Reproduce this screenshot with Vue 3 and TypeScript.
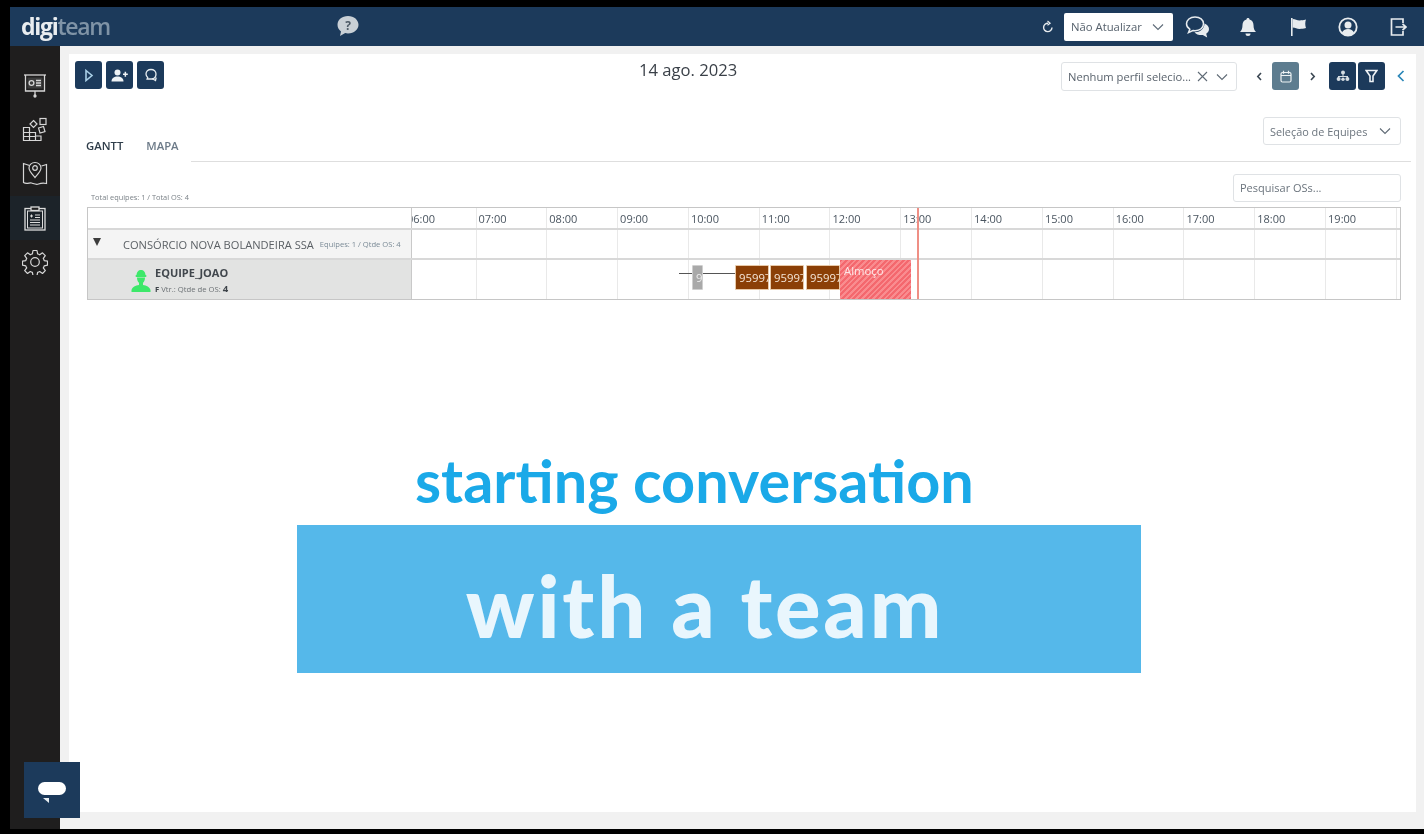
<script setup lang="ts">
const hours: string[] = ['06:00','07:00','08:00','09:00','10:00','11:00','12:00','13:00','14:00','15:00','16:00','17:00','18:00','19:00']
const orders: { id: string; left: number; width: number }[] = [
  { id: '95997', left: 323, width: 34 },
  { id: '95997', left: 358, width: 34 },
  { id: '95997', left: 394, width: 34 },
]
</script>

<template>
  <div class="frame">
    <header class="topbar">
      <div class="logo"><span class="digi">digi</span><span class="team">team</span></div>
      <svg class="help" width="24" height="22" viewBox="0 0 24 22"><path d="M12 1C5.900 1 1.500 4.900 1.500 9.800c0 2.700 1.300 5 3.500 6.600L4 21l5.200-2.900c.9.200 1.800.3 2.800.3 6.100 0 10.500-3.800 10.500-8.600S18.100 1 12 1z" fill="#c9d0d6"/><text x="12" y="14.500" text-anchor="middle" class="help-q">?</text></svg>
      <div class="top-right">
        <svg width="14" height="14" viewBox="0 0 14 14" fill="none" stroke="#e6eaee" stroke-width="1.400"><path d="M11 7.500A4.200 4.200 0 1 1 7.200 3.200"/><path d="M6.500 1l2.600 2.200-2.600 2" stroke-width="1.200"/></svg>
        <div class="top-select"><span>Não Atualizar</span><svg width="12" height="8" viewBox="0 0 12 8" fill="none" stroke="#5e6b78" stroke-width="1.100"><path d="M1 1.500l5 5 5-5"/></svg></div>
        <svg class="ti ti-chat" width="26" height="24" viewBox="0 0 26 24"><path d="M10 2C5 2 1.500 5 1.500 8.800c0 2.300 1.300 4.200 3.300 5.400L3.500 17.500l4.500-2c.7.100 1.300.2 2 .2 5 0 8.500-3 8.500-6.900S15 2 10 2z" fill="none" stroke="#e8ecef" stroke-width="1.500"/><path d="M19.500 8.500c2.700 1 4.500 3 4.500 5.500 0 2-1.100 3.600-2.800 4.700l1 3.800-4.400-2.500c-3.500.3-6.600-.6-8.300-2.800 5 .2 9.800-2.800 10-8.700z" fill="#e8ecef"/></svg>
        <svg class="ti ti-bell" width="20" height="20" viewBox="0 0 20 20"><path d="M10 1c.9 0 1.500.6 1.500 1.400 2.700.7 4 2.900 4 5.600 0 3.500.9 5.400 2.500 7H2c1.600-1.600 2.500-3.500 2.500-7 0-2.700 1.300-4.900 4-5.600C8.500 1.600 9.100 1 10 1z" fill="#e8ecef"/><path d="M7.500 16.500h5a2.500 2.500 0 0 1-5 0z" fill="#e8ecef"/></svg>
        <svg class="ti ti-flag" width="20" height="20" viewBox="0 0 20 20"><path d="M2 1h1.600v18H2z" fill="#e8ecef"/><path d="M3.600 2c3 0 4 1.500 7 1.500 2 0 3.600-.3 6.400-.9-1 2-1 6.400 0 8.400-2.800.6-4.400.9-6.400.9-3 0-4-1.400-7-1.400z" fill="#e8ecef"/></svg>
        <svg class="ti ti-user" width="20" height="20" viewBox="0 0 20 20"><circle cx="10" cy="10" r="8.700" fill="none" stroke="#e8ecef" stroke-width="1.800"/><circle cx="10" cy="8" r="3.500" fill="#e8ecef"/><path d="M3.800 16c1-2.800 3.500-4 6.200-4s5.200 1.200 6.200 4a8 8 0 0 1-12.400 0z" fill="#e8ecef"/></svg>
        <svg class="ti ti-exit" width="18" height="20" viewBox="0 0 18 20" fill="none" stroke="#e8ecef" stroke-width="1.700"><path d="M14 6V2H2.500v16H14v-4"/><path d="M6.500 10H17M13.500 6.800 17 10l-3.500 3.200"/></svg>
      </div>
    </header>

    <div class="body">
      <aside class="side">
        <div class="nav-item">
          <svg width="24" height="26" viewBox="0 0 24 26" fill="none" stroke="#d6d6d6" stroke-width="1.300"><path d="M1 2h22"/><path d="M2.500 2v16h19V2"/><rect x="4.500" y="4.500" width="15" height="11" fill="#3c3c3c" stroke="none"/><circle cx="8.500" cy="10" r="2.400"/><path d="M13 7.500h5M13 10h5M13 12.500h5"/><path d="M12 18v4"/><circle cx="12" cy="23" r="1" fill="#d6d6d6"/></svg>
        </div>
        <div class="nav-item">
          <svg width="26" height="26" viewBox="0 0 26 26" fill="none" stroke="#d6d6d6" stroke-width="1.200"><path d="M1.500 10.500h6v13h-6zM7.500 15.500h6v8h-6zM13.500 19h5.500v4.500h-5.500zM1.500 15.500h6M1.500 19.500h12"/><path d="M11.500 3.500l3.500 3.500-3.500 3.500L8 7z"/><rect x="18" y="1.500" width="6" height="6"/><path d="M16.500 11l5-1.500 1.500 5-5 1.500z"/></svg>
        </div>
        <div class="nav-item">
          <svg width="26" height="26" viewBox="0 0 26 26" fill="none" stroke="#d6d6d6" stroke-width="1.200"><path d="M7.500 4.500 1.500 2.500v19c3 2 6 0 8 .5s4.500 2 7 1 4-1.500 8-.5v-19l-5 1.500"/><path d="M13 1.500c-3.500 0-6 2.500-6 5.500 0 3 3 6 6 9.500 3-3.500 6-6.500 6-9.500 0-3-2.500-5.500-6-5.500z" fill="#1f1e1e"/><circle cx="13" cy="7" r="2.300"/></svg>
        </div>
        <div class="nav-item active">
          <svg width="22" height="25" viewBox="0 0 22 25" fill="none" stroke="#dcdcdc" stroke-width="1.300"><rect x="1" y="2.500" width="20" height="21.500"/><rect x="3.500" y="5" width="15" height="17" stroke-width="1"/><rect x="7" y="1" width="8" height="3.500" fill="#1f1f1f"/><path d="M6 10h3M7.500 8.500v3M11 9h5M11 11.500h5M6 14h10M6 16.500h10M6 19h10" stroke-width="1"/></svg>
        </div>
        <div class="nav-item">
          <svg width="26" height="26" viewBox="0 0 26 26" fill="none" stroke="#d6d6d6" stroke-width="1.200"><circle cx="13" cy="13" r="4.300"/><path d="M11 1.500h4l.6 3.400c.8.200 1.500.5 2.100.9l2.800-2 2.800 2.800-2 2.800c.4.700.7 1.400.9 2.200l3.300.6v4l-3.300.6c-.2.800-.5 1.500-.9 2.100l2 2.800-2.800 2.800-2.800-2c-.6.400-1.300.7-2.100.9l-.6 3.300h-4l-.6-3.300c-.8-.2-1.500-.5-2.100-.9l-2.800 2-2.800-2.800 2-2.800c-.4-.6-.7-1.300-.9-2.100l-3.300-.6v-4l3.300-.6c.2-.8.5-1.500.9-2.200l-2-2.800 2.800-2.800 2.800 2c.6-.4 1.300-.7 2.100-.9z" stroke-linejoin="round"/></svg>
        </div>
      </aside>

      <main class="main">
        <section class="card">
          <div class="toolbar">
            <div class="btn-group">
              <button class="sq"><svg width="10" height="13" viewBox="0 0 10 13" fill="none" stroke="#a9cfe6" stroke-width="1.600"><path d="M2 1.500l6 5-6 5z"/></svg></button>
              <button class="sq"><svg width="17" height="13" viewBox="0 0 17 13" fill="#eef2f5"><circle cx="6.500" cy="3.500" r="3"/><path d="M.5 12.500c0-3.300 2.700-5 6-5s6 1.700 6 5z"/><path d="M12 4.500h1.600V2.800h1.500v1.700h1.700V6h-1.700v1.700h-1.500V6H12z"/></svg></button>
              <button class="sq"><svg width="14" height="14" viewBox="0 0 14 14" fill="none" stroke="#e6ecf0" stroke-width="1.300"><path d="M7 1.500c-3 0-5 2-5 4.500 0 1.500.7 2.600 1.700 3.400l-.6 1.600h5.400c2.200-.6 3.500-2.500 3.500-5C12 3.500 10 1.500 7 1.500z"/><path d="M8 10.500l3.500 2 .7-3"/></svg></button>
            </div>
            <h1 class="date">14 ago. 2023</h1>
            <div class="tool-right">
              <div class="select profile"><span class="sel-text">Nenhum perfil selecio...</span>
                <svg width="11" height="11" viewBox="0 0 11 11" stroke="#5f6a75" stroke-width="1.100"><path d="M1 1l9 9M10 1l-9 9"/></svg>
                <svg class="caret" width="12" height="8" viewBox="0 0 12 8" fill="none" stroke="#5f6a75" stroke-width="1.100"><path d="M1 1.500l5 5 5-5"/></svg>
              </div>
              <svg class="cv-l" width="7" height="9" viewBox="0 0 7 9" fill="none" stroke="#3a4652" stroke-width="1.600"><path d="M5 1 1.800 4.500 5 8"/></svg>
              <button class="sq cal"><svg width="12" height="13" viewBox="0 0 12 13" fill="none" stroke="#eef3f5" stroke-width="1.200"><rect x="1" y="2.500" width="10" height="9.500" rx="1.500"/><path d="M1 5.500h10M3.500.8v3M8.500.8v3"/></svg></button>
              <svg class="cv-r" width="7" height="9" viewBox="0 0 7 9" fill="none" stroke="#3a4652" stroke-width="1.600"><path d="M2 1l3.200 3.500L2 8"/></svg>
              <button class="sq tree"><svg width="14" height="12" viewBox="0 0 14 12" fill="#d5dde2"><circle cx="7" cy="2.600" r="2"/><circle cx="2.600" cy="9" r="2"/><circle cx="7" cy="9.300" r="1.700"/><circle cx="11.400" cy="9" r="2"/><path d="M6.500 4h1v2H12v2h-1V7H3v1H2V6h4.500z"/></svg></button>
              <button class="sq filt"><svg width="13" height="14" viewBox="0 0 13 14" fill="none" stroke="#eef2f5" stroke-width="1.600"><path d="M1.200 1.500h10.600L8 7v5.500H5V7z"/></svg></button>
              <svg class="back" width="8" height="12" viewBox="0 0 8 12" fill="none" stroke="#2a86b8" stroke-width="1.700"><path d="M6.500 1 1.500 6l5 5"/></svg>
            </div>
          </div>

          <div class="team-row">
            <div class="select teams"><span class="sel-text muted">Seleção de Equipes</span>
              <svg width="12" height="8" viewBox="0 0 12 8" fill="none" stroke="#5f6a75" stroke-width="1.100"><path d="M1 1.500l5 5 5-5"/></svg>
            </div>
          </div>

          <nav class="tabs">
            <span class="tab on">GANTT</span>
            <span class="tab">MAPA</span>
            <span class="tab-line"></span>
          </nav>

          <div class="search-row">
            <span class="totals">Total equipes: 1 / Total OS: 4</span>
            <div class="search">Pesquisar OSs...</div>
          </div>

          <div class="gantt">
            <div class="g-row g-head">
              <div class="g-left"></div>
              <div class="g-track">
                <div v-for="h in hours" :key="h" class="cell"><span>{{ h }}</span></div>
              </div>
            </div>
            <div class="g-row g-group">
              <div class="g-left group-left">
                <span class="tri"></span>
                <span class="group-name">CONSÓRCIO NOVA BOLANDEIRA SSA</span>
                <span class="group-meta">Equipes: 1 / Qtde OS: 4</span>
              </div>
              <div class="g-track">
                <div v-for="h in hours" :key="h" class="cell"></div>
              </div>
            </div>
            <div class="g-row g-team">
              <div class="g-left team-left">
                <svg class="worker" width="20" height="24" viewBox="0 0 20 24" fill="#3de86a"><path d="M5.500 6.500C5.500 3 7.500 1 10 1s4.500 2 4.500 5.500z"/><rect x="4.500" y="6" width="11" height="2" rx="1"/><path d="M6 8.500h8c0 2.500-.8 4.500-2 5.200V16c3.500.6 6.700 2 7.500 5v2H.5v-2c.8-3 4-4.400 7.500-5v-2.300c-1.200-.7-2-2.700-2-5.200z"/></svg>
                <div class="team-info">
                  <span class="team-name">EQUIPE_JOAO</span>
                  <span class="team-meta"><b>F</b> Vtr.: Qtde de OS: <strong>4</strong></span>
                </div>
              </div>
              <div class="g-track">
                <div v-for="h in hours" :key="h" class="cell"></div>
                <span class="link"></span>
                <span class="bar grey">9</span>
                <span v-for="(o, i) in orders" :key="i" class="bar brown" :style="{ left: o.left + 'px', width: o.width + 'px' }">{{ o.id }}</span>
                <span class="lunch">Almoço</span>
              </div>
            </div>
            <span class="now"></span>
          </div>
        </section>
      </main>
    </div>

    <div class="caption">
      <div class="cap-top">starting conversation</div>
      <div class="cap-box">with a team</div>
    </div>

    <button class="chat"><span class="pill"></span><span class="tail"></span></button>
  </div>
</template>

<style>
html, body { margin: 0; background: #000; }
</style>

<style scoped>
.frame {
  position: relative; width: 1424px; height: 834px; box-sizing: border-box;
  padding: 7px 0 5px 10px; background: #000; display: flex; flex-direction: column;
  font-family: "Open Sans", "Noto Sans", sans-serif; color: #3d4650; overflow: hidden;
  filter: blur(.35px);
}
.topbar { height: 39px; flex: none; background: #1c3a5b; display: flex; align-items: center; padding-left: 11px; }
.logo { width: 315px; font-size: 23px; font-weight: 700; letter-spacing: -1.300px; line-height: 1; margin-top: -1px; }
.digi { color: #e9edf0; }
.team { color: #7f93a6; font-weight: 600; }
.help { margin-top: -1px; }
.help-q { font: 700 12px "Open Sans", sans-serif; fill: #4d5a66; }
.top-right { margin-left: auto; display: flex; align-items: center; }
.top-right > svg:first-child { margin-right: 9px; }
.top-select { width: 109px; height: 28px; box-sizing: border-box; background: #fff; border-radius: 2px; display: flex; align-items: center; justify-content: space-between; padding: 0 9px 0 7px; font-size: 11.300px; color: #56616c; }
.ti-chat { margin: 0 0 0 12px; }
.ti-bell { margin-left: 27px; }
.ti-flag { margin-left: 31px; }
.ti-user { margin-left: 29px; }
.ti-exit { margin: 0 17px 0 31px; }

.body { flex: 1; display: flex; min-height: 0; }
.side { width: 50px; flex: none; background: #1f1e1e; padding-top: 18px; display: flex; flex-direction: column; }
.nav-item { height: 44px; display: flex; align-items: center; justify-content: center; }
.nav-item.active { background: #1c2329; }
.main { flex: 1; background: #f1f1f1; padding: 8px 8px 17px 9px; display: flex; }
.card { flex: 1; background: #fff; padding: 7px 11px 0 6px; display: flex; flex-direction: column; box-sizing: border-box; }

.toolbar { display: flex; align-items: flex-start; position: relative; height: 30px; }
.btn-group { display: flex; gap: 4px; }
.sq { width: 27px; height: 28px; border: 0; padding: 0; border-radius: 3px; background: #1c3a5b; display: flex; align-items: center; justify-content: center; }
.date { position: absolute; left: 564px; top: -1px; margin: 0; font-size: 16.600px; font-weight: 400; line-height: 19px; color: #3a4048; white-space: nowrap; }
.tool-right { margin-left: auto; display: flex; align-items: center; }
.select { box-sizing: border-box; background: #fff; border: 1px solid #dfe2e5; border-radius: 3px; display: flex; align-items: center; font-size: 11.200px; color: #5a636d; }
.profile { width: 176px; height: 29px; padding: 0 8px 0 6px; margin-top: 1px; }
.profile .sel-text { flex: 1; white-space: nowrap; }
.profile .caret { margin-left: 8px; }
.cv-l { margin-left: 19px; }
.cal { background: #5d7c8f; margin-left: 9px; }
.cv-r { margin-left: 10px; }
.tree { margin-left: 13px; }
.filt { margin-left: 2px; }
.back { margin-left: 12px; }

.team-row { display: flex; justify-content: flex-end; margin-top: 26px; padding-right: 4px; }
.teams { width: 138px; height: 28px; padding: 0 9px 0 6px; justify-content: space-between; font-size: 10.900px; }
.muted { color: #6b747d; }

.tabs { display: flex; align-items: flex-end; height: 17px; margin-left: 11px; margin-right: -6px; font-size: 11.300px; }
.tab { font-weight: 600; color: #6c7a88; margin-right: 23px; line-height: 16px; padding-bottom: 8px; white-space: nowrap; }
.tab.on { color: #2f3d4a; }
.tab-line { flex: 1; height: 1px; background: #dedede; margin-left: -11px; }

.search-row { display: flex; justify-content: space-between; align-items: flex-end; height: 40px; padding: 0 4px 0 16px; }
.totals { font-size: 7.400px; color: #7b8288; line-height: 9px; }
.search { box-sizing: border-box; width: 168px; height: 28px; background: #fff; border: 1px solid #dfe2e5; border-radius: 3px; line-height: 26px; padding-left: 6px; font-size: 11px; color: #6b747d; }

.gantt { position: relative; margin: 5px 4px 0 12px; border: 1px solid #c6c6c6; width: 1312px; }
.g-row { display: flex; border-bottom: 2px solid #d8d8d8; }
.g-row:last-of-type { border-bottom: 0; }
.g-head { height: 20px; }
.g-group { height: 28px; }
.g-team { height: 39px; }
.g-left { width: 324px; flex: none; border-right: 1px solid #c9c9c9; box-sizing: border-box; }
.g-track { flex: 1; display: flex; position: relative; overflow: hidden; }
.cell { width: 70.800px; flex: none; box-sizing: border-box; border-right: 1px solid #e9e9e9; font-size: 11px; color: #4a5560; line-height: 22px; padding-left: 2px; white-space: nowrap; overflow: hidden; }
.cell:first-child { width: 64.500px; text-indent: -7px; }
.group-left { background: #f4f4f4; display: flex; align-items: center; padding-left: 5px; }
.tri { width: 0; height: 0; border-left: 4.500px solid transparent; border-right: 4.500px solid transparent; border-top: 8px solid #3c3c3c; margin-top: -5px; }
.group-name { font-size: 11.100px; color: #5a5f64; margin-left: 22px; white-space: nowrap; }
.group-meta { font-size: 7.600px; color: #7a8a96; margin-left: 6px; white-space: nowrap; }
.team-left { background: #e2e3e2; display: flex; align-items: center; padding-left: 43px; }
.worker { margin-top: 3px; }
.team-info { display: flex; flex-direction: column; margin-left: 4px; }
.team-name { font-size: 11px; font-weight: 700; color: #41474d; line-height: 14px; margin-top: 1px; }
.team-meta { font-size: 7.700px; color: #6d7276; line-height: 10px; margin-top: 4px; }
.team-meta b { color: #3c4248; }
.team-meta strong { font-size: 9.500px; color: #3c4248; }

.link { position: absolute; left: 267px; top: 13px; width: 56px; height: 1px; background: #555; }
.bar { position: absolute; top: 5px; height: 25px; box-sizing: border-box; border: 1px solid #e8c9a8; border-radius: 1px; line-height: 23px; font-size: 11.300px; color: #f5e6d8; padding-left: 3px; overflow: hidden; white-space: nowrap; }
.brown { background: #8b3f06; }
.grey { left: 280px; width: 11px; background: #a9a9a9; border-color: #cfcfcf; color: #eee; padding-left: 3px; }
.lunch { position: absolute; left: 428px; top: 0; width: 71px; height: 39px; box-sizing: border-box; padding: 3px 0 0 4px; font-size: 11.300px; line-height: 16px; color: #fde7e7; background: repeating-linear-gradient(135deg, #f4686e 0 2px, #f98c8f 2px 4px); }
.now { position: absolute; left: 829px; top: 0; bottom: 0; width: 2px; background: #ef8f85; }

.caption { position: absolute; left: 297px; top: 448px; width: 844px; }
.cap-top { height: 77px; box-sizing: border-box; padding-left: 118px; font-family: Lato, "Open Sans", sans-serif; font-weight: 700; font-size: 59.400px; line-height: 64px; color: #1aa9e8; white-space: nowrap; }
.cap-box { height: 148px; background: #55b8ea; color: #e9f6fd; font-family: Lato, "Open Sans", sans-serif; font-weight: 900; font-size: 85px; letter-spacing: 2.800px; line-height: 161px; text-align: center; padding-right: 28px; box-sizing: border-box; white-space: nowrap; }

.chat { position: absolute; left: 24px; top: 762px; width: 56px; height: 56px; padding: 0; border: 0; background: #1c3a5b; }
.pill { position: absolute; left: 14px; top: 20px; width: 28px; height: 13px; border-radius: 7px; background: #fff; }
.tail { position: absolute; left: 19px; top: 36px; width: 0; height: 0; border-top: 5px solid #e8eef2; border-right: 6px solid transparent; border-left: 0; transform: scaleX(-1); }
</style>
